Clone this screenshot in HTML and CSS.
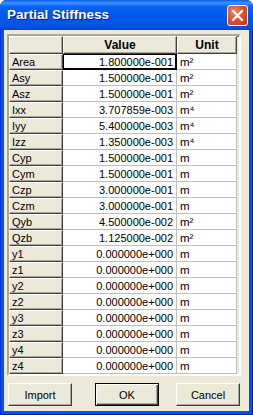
FILE: index.html
```html
<!DOCTYPE html>
<html lang="en">
<head>
<meta charset="UTF-8" />
<meta name="viewport" content="width=device-width, initial-scale=1" />
<title>Partial Stiffness</title>
<link rel="stylesheet" href="styles.css">
</head>
<body>

<div class="window">
  <div class="titlebar">
    <span class="title">Partial Stiffness</span>
    <button class="close" title="Close">
      <svg width="13" height="13" viewBox="0 0 13 13">
        <path d="M2 2 L11 11 M11 2 L2 11" stroke="#fff" stroke-width="2.2" stroke-linecap="square" />
      </svg>
    </button>
  </div>

  <div class="client">
    <div class="grid-frame">
      <div class="grid">
        <div class="head"></div>
        <div class="head bold">Value</div>
        <div class="head bold">Unit</div>

        <div class="rowhead">Area</div><div class="val current">1.800000e-001</div><div class="unit">m²</div>
        <div class="rowhead">Asy</div><div class="val">1.500000e-001</div><div class="unit">m²</div>
        <div class="rowhead">Asz</div><div class="val">1.500000e-001</div><div class="unit">m²</div>
        <div class="rowhead">Ixx</div><div class="val">3.707859e-003</div><div class="unit">m⁴</div>
        <div class="rowhead">Iyy</div><div class="val">5.400000e-003</div><div class="unit">m⁴</div>
        <div class="rowhead">Izz</div><div class="val">1.350000e-003</div><div class="unit">m⁴</div>
        <div class="rowhead">Cyp</div><div class="val">1.500000e-001</div><div class="unit">m</div>
        <div class="rowhead">Cym</div><div class="val">1.500000e-001</div><div class="unit">m</div>
        <div class="rowhead">Czp</div><div class="val">3.000000e-001</div><div class="unit">m</div>
        <div class="rowhead">Czm</div><div class="val">3.000000e-001</div><div class="unit">m</div>
        <div class="rowhead">Qyb</div><div class="val">4.500000e-002</div><div class="unit">m²</div>
        <div class="rowhead">Qzb</div><div class="val">1.125000e-002</div><div class="unit">m²</div>
        <div class="rowhead">y1</div><div class="val">0.000000e+000</div><div class="unit">m</div>
        <div class="rowhead">z1</div><div class="val">0.000000e+000</div><div class="unit">m</div>
        <div class="rowhead">y2</div><div class="val">0.000000e+000</div><div class="unit">m</div>
        <div class="rowhead">z2</div><div class="val">0.000000e+000</div><div class="unit">m</div>
        <div class="rowhead">y3</div><div class="val">0.000000e+000</div><div class="unit">m</div>
        <div class="rowhead">z3</div><div class="val">0.000000e+000</div><div class="unit">m</div>
        <div class="rowhead">y4</div><div class="val">0.000000e+000</div><div class="unit">m</div>
        <div class="rowhead">z4</div><div class="val">0.000000e+000</div><div class="unit">m</div>
      </div>
    </div>

    <div class="buttons">
      <button class="btn">Import</button>
      <button class="btn default">OK</button>
      <button class="btn">Cancel</button>
    </div>
  </div>
</div>

</body>
</html>
```

FILE: styles.css
```css
body {
  margin: 0;
  font-family: "Liberation Sans", Arial, sans-serif;
  font-size: 11px;
}
.window {
  width: 253px;
  height: 415px;
  display: flex;
  flex-direction: column;
  background: #0055e5;
  border-radius: 7px 7px 0 0;
  box-shadow: inset 1px 0 0 #0831d9, inset -1px 0 0 #001ea0, inset 0 -1px 0 #001ea0;
  box-sizing: border-box;
}
.titlebar {
  height: 30px;
  flex: none;
  display: flex;
  align-items: center;
  justify-content: space-between;
  padding: 0 5px 0 7px;
  border-radius: 7px 7px 0 0;
  background: linear-gradient(to bottom, #0a5ee8 0%, #3e93ff 10%, #0a63f2 22%, #0058ee 50%, #0055e5 85%, #0047d6 100%);
}
.title {
  color: #fff;
  font-weight: bold;
  font-size: 13.5px;
  text-shadow: 1px 1px 0 #0a1883;
  margin-top: -1px;
}
.close {
  width: 21px;
  height: 21px;
  padding: 0;
  margin-top: 1px;
  border: 1px solid #fff;
  border-radius: 3px;
  background: radial-gradient(circle at 35% 30%, #f08a6a 0%, #e0502b 45%, #c43510 100%);
  display: flex;
  align-items: center;
  justify-content: center;
}
.client {
  flex: 1;
  margin: 0 4px 4px 4px;
  background: #ece9d8;
  padding: 4px 0 0 3px;
  display: flex;
  flex-direction: column;
}
.grid-frame {
  width: 234px;
  height: 342px;
  box-sizing: border-box;
  border-style: solid;
  border-width: 2px;
  border-color: #aca899 #fff #fff #aca899;
  box-shadow: inset 1px 1px 0 #716f64;
  background: #ece9d8;
}
.grid {
  display: grid;
  grid-template-columns: 54px 114px 60px;
  grid-template-rows: 18px repeat(20, 16px);
}
.grid > div {
  box-sizing: border-box;
  line-height: 14px;
  white-space: nowrap;
  overflow: hidden;
}
.head,
.rowhead {
  background: #ece9d8;
  border-style: solid;
  border-width: 1px;
  border-color: #fff #404040 #404040 #fff;
  box-shadow: inset -1px -1px 0 #aca899;
  color: #000;
}
.head {
  text-align: center;
  line-height: 16px !important;
  font-size: 12px;
}
.bold {
  font-weight: bold;
}
.rowhead {
  padding-left: 2px;
}
.val,
.unit {
  background: #fff;
  border-right: 1px solid #c0c0c0;
  border-bottom: 1px solid #c0c0c0;
  padding-top: 1px;
}
.val {
  text-align: right;
  padding-right: 3px;
}
.unit {
  padding-left: 3px;
  font-size: 11.5px;
}
.val.current {
  border: 1px solid #000;
  box-shadow: inset -1px -1px 0 #000;
  padding-top: 0;
}
.buttons {
  display: flex;
  margin-top: 7px;
  padding-left: 1px;
}
.btn {
  width: 64px;
  height: 23px;
  padding: 0;
  box-sizing: border-box;
  font-family: "Liberation Sans", Arial, sans-serif;
  font-size: 11px;
  color: #000;
  background: #ece9d8;
  border-style: solid;
  border-width: 1px;
  border-color: #fff #404040 #404040 #fff;
  box-shadow: inset -1px -1px 0 #aca899;
}
.btn.default {
  margin: 0 17px 0 23px;
  border: 1px solid #000;
  box-shadow: inset 1px 1px 0 #fff, inset -1px -1px 0 #404040, inset -2px -2px 0 #aca899;
}
```
